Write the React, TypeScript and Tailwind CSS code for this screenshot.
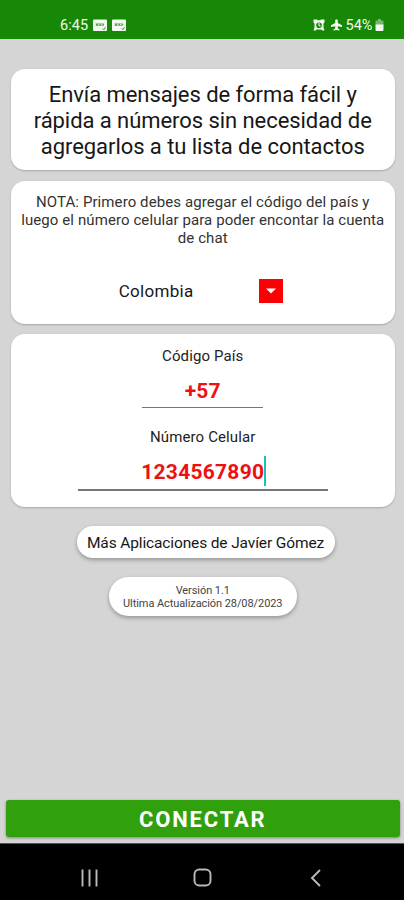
import type { ReactNode } from "react";

function Card({ className, children }: { className: string; children: ReactNode }) {
  return (
    <section
      className={`mx-auto w-[384px] rounded-[14px] bg-white text-center shadow-[0_1px_2px_rgba(0,0,0,0.22)] ${className}`}
    >
      {children}
    </section>
  );
}

function NotificationIcon() {
  return (
    <svg width="15" height="13" viewBox="0 0 15 13">
      <rect x="0" y="0.5" width="14" height="11.5" rx="1" fill="#f3faf1" />
      <path d="M2.500 4.800h8M2.500 6.500h8" fill="none" stroke="#9cc896" strokeWidth="1.2" />
      <path d="M3 5.700h2M6.500 5.700h1.500M9.500 5.700h1.500" fill="none" stroke="#55a04a" strokeWidth="1.8" />
      <path d="M9.500 9.500l1.500 1.300L12.500 8" fill="none" stroke="#3b9a30" strokeWidth="0.9" />
    </svg>
  );
}

function StatusBar() {
  return (
    <header className="flex h-[38.5px] items-start bg-[#168806] pt-[18px] text-[14.5px] leading-[15px] text-[#effaed]">
      <span className="ml-[60px] w-[33px] tracking-[0.1px]">6:45</span>
      <span className="mt-px flex gap-[3.5px]">
        <NotificationIcon />
        <NotificationIcon />
      </span>
      <span className="ml-auto mr-[20.5px] flex items-start">
        <svg className="mt-px" width="12" height="12" viewBox="0 0 12 12">
          <path d="M.5 3.5V.5h3.3L5 1.2h2L8.2.5h3.3v3l-1 1v4l1 3H9.3l-1-1H3.7l-1 1H.5l1-3v-4z" fill="#effaed" />
          <circle cx="6" cy="6.2" r="2.8" fill="#168806" />
          <path d="M6 4v2.5l1.5.8" fill="none" stroke="#effaed" strokeWidth="1.1" />
        </svg>
        <svg className="ml-[4.5px] mt-px" width="13" height="12" viewBox="0 0 13 12">
          <path d="M6.5.3c.9 0 1.3.8 1.3 1.7v2l4.2 2.300v1.7L7.8 7.300v2l1.700 1.200v1.100l-3-.6-3 .6v-1.100l1.700-1.200v-2L1 8V6.300L5.200 4V2c0-.9.4-1.700 1.300-1.700z" fill="#effaed" />
        </svg>
        <span className="ml-[3px] w-[29px]">54%</span>
        <svg className="mt-px" width="9" height="13" viewBox="0 0 9 13">
          <path d="M3 0h3v1.5h1.5q1 0 1 1V6h-8V2.5q0-1 1-1H3z" fill="#76b66d" />
          <path d="M.5 5.5h8V11q0 1-1 1h-6q-1 0-1-1z" fill="#f3faf1" />
        </svg>
      </span>
    </header>
  );
}

function NavigationBar() {
  return (
    <nav className="h-[57px] border-t border-[#555] bg-black">
      <svg width="404" height="56" viewBox="0 844 404 56" fill="none" stroke="#bababa" strokeWidth="1.9">
        <path d="M82.5 869.5v17M89.5 869.5v17M96.5 869.5v17" />
        <rect x="194.5" y="869.5" width="16" height="16" rx="4.8" />
        <path d="M320 870l-8 8 8 8" />
      </svg>
    </nav>
  );
}

export default function App() {
  return (
    <div className="flex h-[900px] w-[404px] flex-col overflow-hidden bg-[#d5d5d5] font-['Roboto',sans-serif] text-[#171717]">
      <StatusBar />
      <main className="flex flex-1 flex-col pl-[1.5px] pt-[30.5px]">
        <Card className="h-[101px] pt-[13px] text-[22px] leading-[26px] tracking-[-0.06px]">
          <h1>
            Envía mensajes de forma fácil y
            <br />
            rápida a números sin necesidad de
            <br />
            agregarlos a tu lista de contactos
          </h1>
        </Card>

        <Card className="mt-[10.5px] h-[143.5px] pt-[12px]">
          <p className="text-[15px] leading-[18px] tracking-[0.09px] text-[#333]">
            NOTA: Primero debes agregar el código del país y
            <br />
            luego el número celular para poder encontar la cuenta
            <br />
            de chat
          </p>
          <div className="mt-[32px] flex items-center pl-[108px]">
            <span className="w-[140px] text-left text-[17px] leading-6 tracking-[0.3px]">Colombia</span>
            <button className="flex size-6 items-center justify-center bg-[#fb0004]" aria-label="Elegir país">
              <svg width="10" height="6" viewBox="0 0 10 6">
                <path d="M0 .5h10L5 5.5z" fill="#fff" />
              </svg>
            </button>
          </div>
        </Card>

        <Card className="mt-[10px] flex h-[172.5px] flex-col items-center pt-[13px]">
          <span className="text-[15px] leading-[18px] tracking-[0.12px] text-[#222]">Código País</span>
          <span className="mt-[13px] h-[30px] w-[121px] border-b-[1.5px] border-[#777] text-[21px] font-bold leading-[27px] tracking-[0.2px] text-[#ee1111]">
            +57
          </span>
          <span className="mt-[20px] text-[15px] leading-[18px] tracking-[0.12px] text-[#222]">Número Celular</span>
          <span className="mt-[10px] flex h-[35px] w-[250px] justify-center border-b-2 border-[#777] text-[21px] font-bold leading-[33px] tracking-[0.25px] text-[#ee1111]">
            1234567890
            <i className="-mr-[2px] h-[30px] w-[2px] bg-[#20bfae]" />
          </span>
        </Card>

        <button className="ml-[75px] mt-[19.5px] h-[31.5px] w-[258px] whitespace-nowrap rounded-full bg-white pt-px text-[15.5px] leading-[32px] tracking-[-0.13px] shadow-[0_2px_4px_rgba(0,0,0,0.3)]">
          Más Aplicaciones de Javíer Gómez
        </button>
        <div className="mx-auto mt-[19px] h-[39px] w-[188px] rounded-full bg-white pt-[7px] text-center text-[11px] leading-[13px] tracking-[-0.08px] text-[#444] shadow-[0_2px_4px_rgba(0,0,0,0.3)]">
          Versión 1.1
          <br />
          Ultima Actualización 28/08/2023
        </div>

        <button className="mx-auto mb-[6px] mt-auto h-[37px] w-[394px] rounded-[3px] bg-[#30a00d] text-[22px] font-bold leading-[39px] tracking-[1.8px] text-white shadow-[0_1px_3px_rgba(0,0,0,0.4)]">
          CONECTAR
        </button>
      </main>
      <NavigationBar />
    </div>
  );
}
